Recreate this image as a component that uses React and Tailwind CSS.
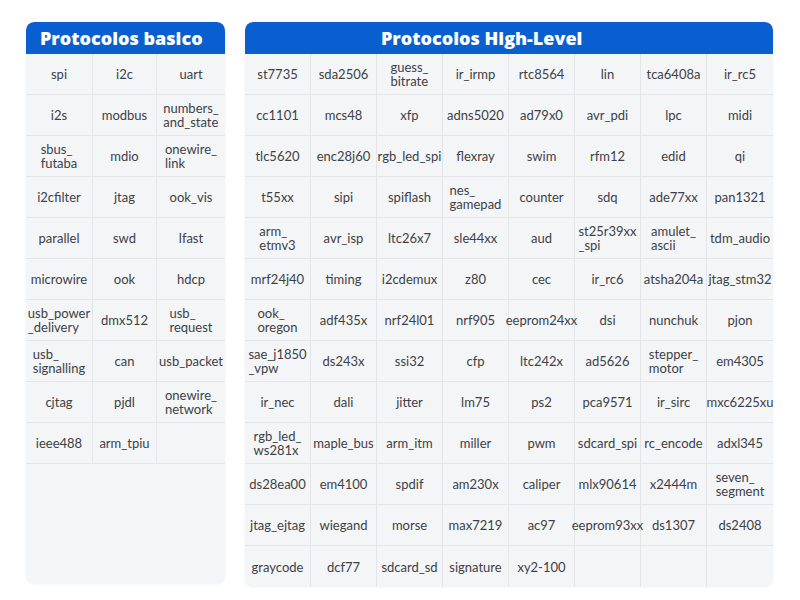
const basico = [
  ["spi", "i2c", "uart"],
  ["i2s", "modbus", "numbers_\nand_state"],
  ["sbus_\nfutaba", "mdio", "onewire_\nlink"],
  ["i2cfilter", "jtag", "ook_vis"],
  ["parallel", "swd", "lfast"],
  ["microwire", "ook", "hdcp"],
  ["usb_power\n_delivery", "dmx512", "usb_\nrequest"],
  ["usb_\nsignalling", "can", "usb_packet"],
  ["cjtag", "pjdl", "onewire_\nnetwork"],
  ["ieee488", "arm_tpiu", ""],
];

const highLevel = [
  ["st7735", "sda2506", "guess_\nbitrate", "ir_irmp", "rtc8564", "lin", "tca6408a", "ir_rc5"],
  ["cc1101", "mcs48", "xfp", "adns5020", "ad79x0", "avr_pdi", "lpc", "midi"],
  ["tlc5620", "enc28j60", "rgb_led_spi", "flexray", "swim", "rfm12", "edid", "qi"],
  ["t55xx", "sipi", "spiflash", "nes_\ngamepad", "counter", "sdq", "ade77xx", "pan1321"],
  ["arm_\netmv3", "avr_isp", "ltc26x7", "sle44xx", "aud", "st25r39xx\n_spi", "amulet_\nascii", "tdm_audio"],
  ["mrf24j40", "timing", "i2cdemux", "z80", "cec", "ir_rc6", "atsha204a", "jtag_stm32"],
  ["ook_\noregon", "adf435x", "nrf24l01", "nrf905", "eeprom24xx", "dsi", "nunchuk", "pjon"],
  ["sae_j1850\n_vpw", "ds243x", "ssi32", "cfp", "ltc242x", "ad5626", "stepper_\nmotor", "em4305"],
  ["ir_nec", "dali", "jitter", "lm75", "ps2", "pca9571", "ir_sirc", "mxc6225xu"],
  ["rgb_led_\nws281x", "maple_bus", "arm_itm", "miller", "pwm", "sdcard_spi", "rc_encode", "adxl345"],
  ["ds28ea00", "em4100", "spdif", "am230x", "caliper", "mlx90614", "x2444m", "seven_\nsegment"],
  ["jtag_ejtag", "wiegand", "morse", "max7219", "ac97", "eeprom93xx", "ds1307", "ds2408"],
  ["graycode", "dcf77", "sdcard_sd", "signature", "xy2-100", "", "", ""],
];

const Cell = ({ text, last, bottom }) => (
  <div
    className={
      "flex items-center justify-center h-[41px] border-[#e3e5e8] " +
      (last ? "" : "border-r ") +
      (bottom ? "" : "border-b")
    }
  >
    <div className="text-left whitespace-pre leading-[14px]">{text}</div>
  </div>
);

const Panel = ({ title, rows, cols, titleClass, className, fillEnd }) => (
  <div className={"flex flex-col bg-[#f4f5f7] rounded-lg overflow-hidden shadow-[0_0_3px_rgba(0,0,0,0.06)] " + className}>
    <div className={"h-[32px] bg-[#0a5fd0] rounded-t-lg flex items-center text-white font-extrabold text-[18px] " + titleClass}
      style={{ fontFamily: '"Open Sans", sans-serif' }}>
      {title}
    </div>
    <div className={cols === 3 ? "grid grid-cols-[67px_64px_68px]" : "grid grid-cols-8"}>
      {rows.flatMap((row, r) =>
        row.map((t, c) => (
          <Cell key={r + "-" + c} text={t} last={c === row.length - 1} bottom={!fillEnd && r === rows.length - 1} />
        ))
      )}
    </div>
  </div>
);

export default function App() {
  return (
    <div className="w-[800px] h-[600px] bg-white pt-[22px] pl-[26px] flex gap-[20px] text-[#3c4146] text-[13px]"
      style={{ fontFamily: 'Lato, "Noto Sans", sans-serif' }}>
      <Panel title="Protocolos basico" rows={basico} cols={3} titleClass="pl-[14px]" className="w-[199px] h-[562px]" fillEnd />
      <Panel title="Protocolos High-Level" rows={highLevel} cols={8} titleClass="pl-[136px]" className="w-[528px] h-[565px]" />
    </div>
  );
}
